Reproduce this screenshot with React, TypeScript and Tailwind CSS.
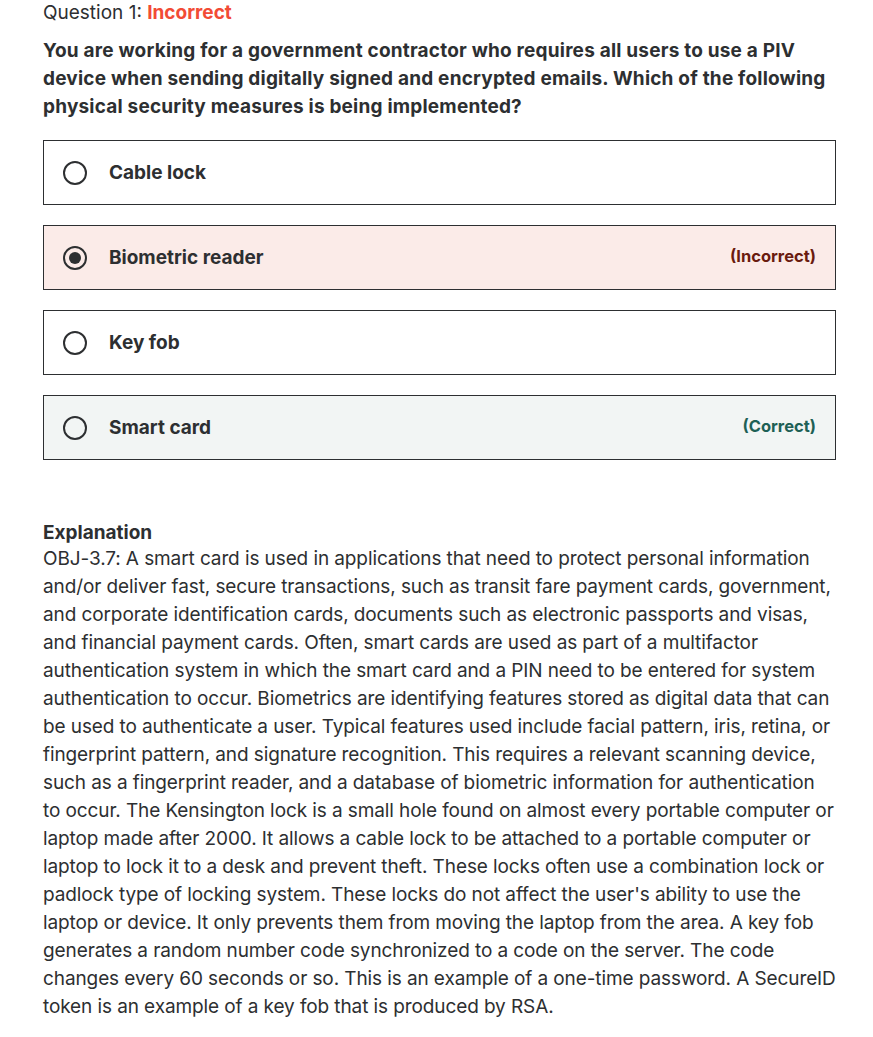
import React from "react";

const font = { fontFamily: "Inter, 'Noto Sans', sans-serif" };

function Radio({ checked }: { checked?: boolean }) {
  return (
    <span className="flex h-[24px] w-[24px] shrink-0 items-center justify-center rounded-full border-2 border-[#2d2f31]">
      {checked && <span className="h-[12px] w-[12px] rounded-full bg-[#2d2f31]" />}
    </span>
  );
}

function Option({
  label,
  checked,
  tag,
  bg,
  tagColor,
}: {
  label: string;
  checked?: boolean;
  tag?: string;
  bg: string;
  tagColor?: string;
}) {
  return (
    <div className={`flex h-[65px] items-center border border-[#2d2f31] pl-[19px] pr-[19px] ${bg}`}>
      <Radio checked={checked} />
      <span className="ml-[22px] flex-1 text-[19px] font-bold leading-[24px] text-[#2d2f31]">{label}</span>
      {tag && <span className={`text-[16.5px] font-bold leading-[20px] ${tagColor} -mt-[4px]`}>{tag}</span>}
    </div>
  );
}

const lines = [
  "OBJ-3.7: A smart card is used in applications that need to protect personal information",
  "and/or deliver fast, secure transactions, such as transit fare payment cards, government,",
  "and corporate identification cards, documents such as electronic passports and visas,",
  "and financial payment cards. Often, smart cards are used as part of a multifactor",
  "authentication system in which the smart card and a PIN need to be entered for system",
  "authentication to occur. Biometrics are identifying features stored as digital data that can",
  "be used to authenticate a user. Typical features used include facial pattern, iris, retina, or",
  "fingerprint pattern, and signature recognition. This requires a relevant scanning device,",
  "such as a fingerprint reader, and a database of biometric information for authentication",
  "to occur. The Kensington lock is a small hole found on almost every portable computer or",
  "laptop made after 2000. It allows a cable lock to be attached to a portable computer or",
  "laptop to lock it to a desk and prevent theft. These locks often use a combination lock or",
  "padlock type of locking system. These locks do not affect the user's ability to use the",
  "laptop or device. It only prevents them from moving the laptop from the area. A key fob",
  "generates a random number code synchronized to a code on the server. The code",
  "changes every 60 seconds or so. This is an example of a one-time password. A SecureID",
  "token is an example of a key fob that is produced by RSA.",
];

const qLines = [
  "You are working for a government contractor who requires all users to use a PIV",
  "device when sending digitally signed and encrypted emails. Which of the following",
  "physical security measures is being implemented?",
];

export default function App() {
  return (
    <div className="min-h-[1037px] w-[873px] bg-white pl-[43px] pr-[37px] text-[#2d2f31]" style={font}>
      <div className="pt-[1px] text-[19px] leading-[24px]">
        Question 1: <span className="font-bold text-[#f24b35]">Incorrect</span>
      </div>
      <p className="mt-[12px] text-[19px] font-bold leading-[28px] tracking-[0.2px]">
        {qLines.map((l) => (
          <span key={l} className="block whitespace-nowrap">
            {l}
          </span>
        ))}
      </p>
      <div className="mt-[19px] flex flex-col gap-[20px]">
        <Option label="Cable lock" bg="bg-white" />
        <Option label="Biometric reader" checked tag="(Incorrect)" bg="bg-[#fbebe8]" tagColor="text-[#6a1b0f]" />
        <Option label="Key fob" bg="bg-white" />
        <Option label="Smart card" tag="(Correct)" bg="bg-[#f2f5f4]" tagColor="text-[#1e6055]" />
      </div>
      <div className="mt-[59px] text-[19px] font-bold leading-[28px]">Explanation</div>
      <p className="-mt-[2px] text-[19px] leading-[28px] tracking-[-0.1px]">
        {lines.map((l) => (
          <span key={l} className="block whitespace-nowrap">
            {l}
          </span>
        ))}
      </p>
    </div>
  );
}
